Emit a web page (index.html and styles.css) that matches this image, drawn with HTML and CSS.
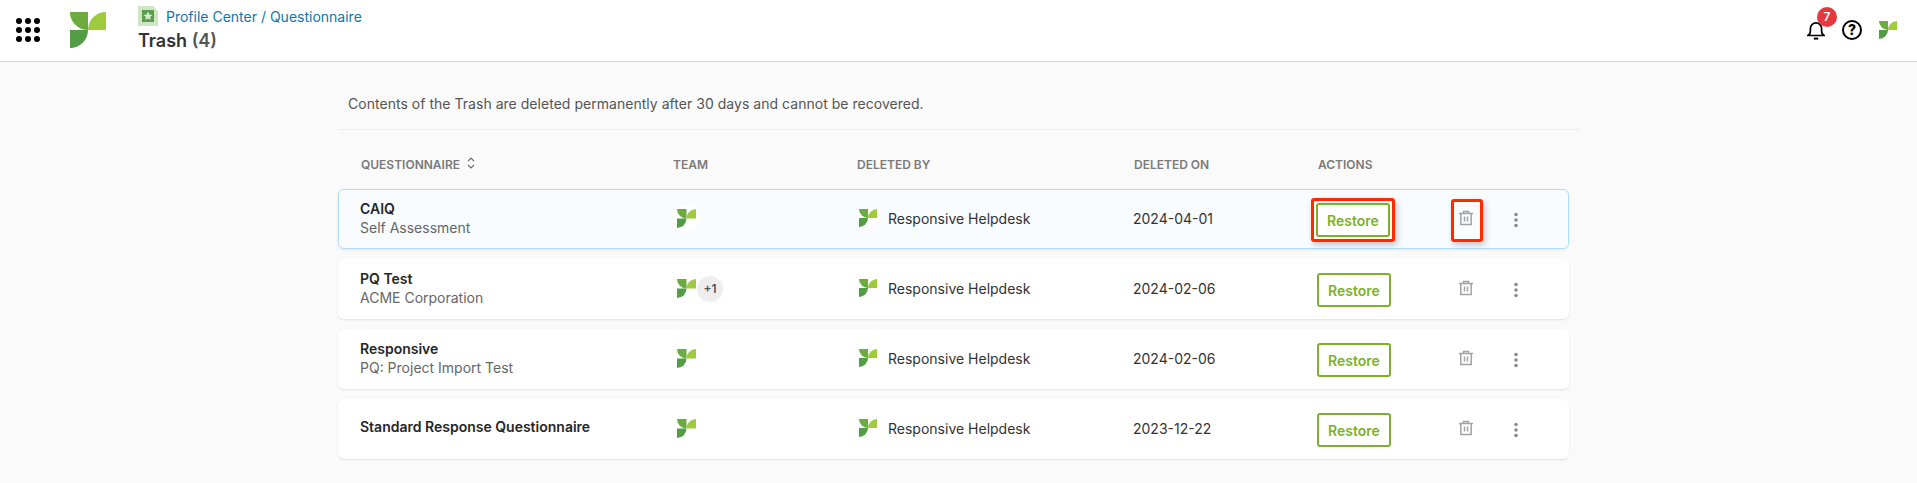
FILE: index.html
```html
<!DOCTYPE html>
<html lang="en">
<head>
<meta charset="utf-8">
<title>Trash</title>
<link rel="stylesheet" href="styles.css">
</head>
<body>
<svg class="defs" width="0" height="0" aria-hidden="true">
  <symbol id="logo" viewBox="0 0 36 36">
    <path d="M0 0H18V18A18 18 0 0 1 0 0Z" fill="#6cab40"/>
    <path d="M18 18A18 18 0 0 1 36 0V18Z" fill="#9dcb3d"/>
    <path d="M0 18H18A18 18 0 0 1 0 36Z" fill="#529d45"/>
  </symbol>
  <symbol id="trash" viewBox="0 0 16 16">
    <path d="M1 3.5H15M5.5 3.5V1.5H10.5V3.5M2.8 3.5V14.5H13.2V3.5M6.5 6.5V11.5M9.5 6.5V11.5" fill="none" stroke="currentColor" stroke-width="1.5"/>
  </symbol>
  <symbol id="kebab" viewBox="0 0 6 16">
    <circle cx="3" cy="2.5" r="1.8" fill="currentColor"/>
    <circle cx="3" cy="8" r="1.8" fill="currentColor"/>
    <circle cx="3" cy="13.5" r="1.8" fill="currentColor"/>
  </symbol>
</svg>

<header class="topbar">
  <div class="apps">
    <i></i><i></i><i></i><i></i><i></i><i></i><i></i><i></i><i></i>
  </div>
  <svg class="brand"><use href="#logo"/></svg>
  <div class="titles">
    <div class="crumb">
      <svg class="crumb-icon" viewBox="0 0 20 20">
        <path d="M0 0H15L20 5V20H0Z" fill="#cfe5c4"/>
        <rect x="4" y="4" width="12" height="12" fill="#5a9f4d"/>
        <path d="M10 5.6L11.3 8.6L14.4 8.9L12.1 11L12.8 14.1L10 12.5L7.2 14.1L7.9 11L5.6 8.9L8.7 8.6Z" fill="#d8ecd2"/>
      </svg>
      <span>Profile Center / Questionnaire</span>
    </div>
    <h1>Trash <span>(4)</span></h1>
  </div>
  <div class="tools">
    <div class="bell">
      <svg viewBox="0 0 18 20" width="18" height="20">
        <path d="M1 14.5C2.8 13.5 3.4 12 3.4 10V7.5A5.6 5.6 0 0 1 14.6 7.5V10C14.6 12 15.2 13.5 17 14.5Z" fill="none" stroke="#000" stroke-width="1.7"/>
        <path d="M6.8 17.6H11.2" fill="none" stroke="#000" stroke-width="2"/>
      </svg>
      <b>7</b>
    </div>
    <span class="help">?</span>
    <svg class="mini-brand"><use href="#logo"/></svg>
  </div>
</header>

<main class="content">
  <p class="notice">Contents of the Trash are deleted permanently after 30 days and cannot be recovered.</p>
  <div class="table-head">
    <div class="sortable">QUESTIONNAIRE
      <svg viewBox="0 0 8 12" width="8" height="12"><path d="M1 4.2L4 1.2L7 4.2M1 7.8L4 10.8L7 7.8" fill="none" stroke="#666" stroke-width="1.2"/></svg>
    </div>
    <div>TEAM</div>
    <div>DELETED BY</div>
    <div>DELETED ON</div>
    <div>ACTIONS</div>
  </div>

  <div class="row row-active">
    <div class="q"><strong>CAIQ</strong><span>Self Assessment</span></div>
    <div class="team"><span class="avatar"><svg><use href="#logo"/></svg></span></div>
    <div class="by"><span class="avatar avatar-sm"><svg><use href="#logo"/></svg></span>Responsive Helpdesk</div>
    <div class="date">2024-04-01</div>
    <div class="act"><button class="restore">Restore<em class="mark mark-restore"></em></button></div>
    <div class="bin"><svg><use href="#trash"/></svg><em class="mark mark-bin"></em></div>
    <svg class="more"><use href="#kebab"/></svg>
  </div>

  <div class="row">
    <div class="q"><strong>PQ Test</strong><span>ACME Corporation</span></div>
    <div class="team"><span class="avatar"><svg><use href="#logo"/></svg></span><span class="chip">+1</span></div>
    <div class="by"><span class="avatar avatar-sm"><svg><use href="#logo"/></svg></span>Responsive Helpdesk</div>
    <div class="date">2024-02-06</div>
    <div class="act"><button class="restore">Restore</button></div>
    <div class="bin"><svg><use href="#trash"/></svg></div>
    <svg class="more"><use href="#kebab"/></svg>
  </div>

  <div class="row">
    <div class="q"><strong>Responsive</strong><span>PQ: Project Import Test</span></div>
    <div class="team"><span class="avatar"><svg><use href="#logo"/></svg></span></div>
    <div class="by"><span class="avatar avatar-sm"><svg><use href="#logo"/></svg></span>Responsive Helpdesk</div>
    <div class="date">2024-02-06</div>
    <div class="act"><button class="restore">Restore</button></div>
    <div class="bin"><svg><use href="#trash"/></svg></div>
    <svg class="more"><use href="#kebab"/></svg>
  </div>

  <div class="row">
    <div class="q q-single"><strong>Standard Response Questionnaire</strong></div>
    <div class="team"><span class="avatar"><svg><use href="#logo"/></svg></span></div>
    <div class="by"><span class="avatar avatar-sm"><svg><use href="#logo"/></svg></span>Responsive Helpdesk</div>
    <div class="date">2023-12-22</div>
    <div class="act"><button class="restore">Restore</button></div>
    <div class="bin"><svg><use href="#trash"/></svg></div>
    <svg class="more"><use href="#kebab"/></svg>
  </div>
</main>
</body>
</html>
```
FILE: styles.css
```css
* { box-sizing: border-box; }
html, body { margin: 0; height: 100%; }
body {
  background: #fafafa;
  font-family: Inter, "Liberation Sans", sans-serif;
  color: #222;
  overflow: hidden;
}
.defs { position: absolute; }

.topbar {
  height: 62px;
  background: #fff;
  border-bottom: 1px solid #d6d6d6;
  display: flex;
  align-items: flex-start;
  padding-left: 16px;
}
.apps {
  display: grid;
  grid-template-columns: repeat(3, 6px);
  gap: 3px;
  margin-top: 18px;
}
.apps i { width: 6px; height: 6px; border-radius: 50%; background: #000; }
.brand { width: 36px; height: 36px; margin: 12px 0 0 30px; }
.titles { margin: 6px 0 0 32px; }
.crumb { display: flex; align-items: center; gap: 8px; height: 20px; font-size: 14px; color: #0f76ae; }
.crumb-icon { width: 20px; height: 20px; }
h1 { margin: 3px 0 0; font-size: 18px; line-height: 24px; font-weight: 600; color: #333; }
h1 span { color: #555; }

.tools { margin-left: auto; display: flex; align-items: flex-start; padding-right: 20px; }
.bell { position: relative; width: 18px; height: 20px; margin-top: 21px; }
.bell svg { display: block; }
.bell b {
  position: absolute;
  left: 10px;
  top: -14px;
  width: 20px;
  height: 20px;
  border-radius: 50%;
  background: #e5383f;
  color: #fff;
  font-size: 12px;
  font-weight: 600;
  line-height: 20px;
  text-align: center;
}
.help {
  width: 20px;
  height: 20px;
  margin: 20px 0 0 17px;
  border: 2px solid #000;
  border-radius: 50%;
  font-size: 14px;
  font-weight: 800;
  line-height: 16px;
  text-align: center;
  color: #000;
}
.mini-brand { width: 18px; height: 18px; margin: 21px 0 0 17px; }

.content { width: 1242px; margin-left: 338px; }
.notice {
  margin: 0;
  height: 68px;
  padding: 33px 0 0 10px;
  font-size: 14px;
  line-height: 18px;
  letter-spacing: 0.03px;
  color: #555;
  border-bottom: 1px solid #ececec;
}
.table-head, .row {
  display: grid;
  grid-template-columns: 314px 183px 276px 184px 141px 55px 1fr;
  align-items: center;
  width: 1231px;
  padding-left: 22px;
}
.table-head {
  grid-template-columns: 312px 184px 277px 184px 1fr;
  padding-left: 23px;
  height: 59px;
  font-size: 12px;
  font-weight: 600;
  color: #7a7a7a;
  padding-top: 9px;
}
.sortable { display: flex; align-items: center; gap: 7px; }
.sortable svg { margin-top: -3px; }

.row {
  height: 60px;
  margin-bottom: 10px;
  background: #fff;
  border-radius: 6px;
  box-shadow: 0 1px 2px rgba(0, 0, 0, 0.1);
  font-size: 14px;
  color: #333;
}
.row-active {
  background: #f8fcff;
  border: 1px solid #b3defa;
  padding-left: 21px;
  box-shadow: 0 1px 3px rgba(0, 0, 0, 0.08);
}
.q { display: flex; flex-direction: column; gap: 1px; margin-top: -2px; }
.q strong { font-size: 14px; font-weight: 600; line-height: 18px; color: #262626; }
.q span { font-size: 14px; line-height: 18px; color: #666; }
.q-single { margin-top: -4px; }

.team { display: flex; align-items: center; margin-left: 3px; }
.avatar {
  display: block;
  width: 19px;
  height: 19px;
  margin-top: -1px;
  border-radius: 50%;
  background: #fff;
  box-shadow: 0 0 0 4px #fff;
}
.avatar svg { display: block; width: 100%; height: 100%; }
.avatar-sm { width: 18px; height: 18px; margin-top: 0; box-shadow: 0 0 0 2px #fff; }
.chip {
  width: 26px;
  height: 26px;
  margin: 0 0 0 1px;
  border-radius: 50%;
  background: #eee;
  color: #555;
  font-size: 12px;
  font-weight: 600;
  line-height: 26px;
  text-align: center;
}
.by { display: flex; align-items: center; gap: 11px; margin: -2px 0 0 2px; }
.date { margin-top: -2px; }

.restore {
  position: relative;
  display: block;
  width: 74px;
  height: 34px;
  margin-top: 2px;
  padding: 0;
  background: #fff;
  border: 2px solid #7db126;
  border-radius: 3px;
  font: 600 14px Inter, "Liberation Sans", sans-serif;
  color: #7db126;
}
.row-active .act { margin-left: -1px; }
.bin { position: relative; width: 16px; height: 16px; margin-top: -3px; color: #a3a3a3; }
.bin svg { display: block; width: 16px; height: 16px; }
.more { width: 6px; height: 16px; margin-top: 2px; color: #8a8a8a; }

.mark {
  position: absolute;
  border: 3px solid #ff2a00;
  border-radius: 3px;
  box-shadow: 2px 3px 6px rgba(0, 0, 0, 0.22);
  pointer-events: none;
}
.mark-restore { left: -7px; top: -7px; width: 84px; height: 44px; }
.mark-bin { left: -7px; top: -11px; width: 32px; height: 43px; }
```
